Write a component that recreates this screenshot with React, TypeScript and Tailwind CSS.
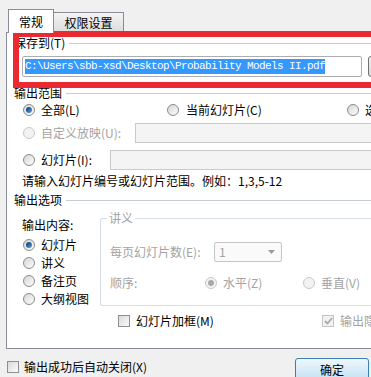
import React from 'react';

const Radio: React.FC<{ checked?: boolean; disabled?: boolean }> = ({ checked = false, disabled = false }) => (
  <span
    className={`flex h-[12px] w-[12px] shrink-0 items-center justify-center rounded-full border ${
      disabled ? 'border-[#c8c8c8] bg-[#f3f3f3]' : 'border-[#8a8a8a] bg-linear-to-br from-[#d6d6d6] to-[#fdfdfd]'
    }`}
  >
    {checked && (
      <span
        className={`h-[6px] w-[6px] rounded-full ${
          disabled ? 'bg-[#a8a8a8]' : 'bg-linear-to-br from-[#0a3570] to-[#5aa6e6]'
        }`}
      />
    )}
  </span>
);

const Check: React.FC<{ checked?: boolean; disabled?: boolean }> = ({ checked = false, disabled = false }) => (
  <span
    className={`flex h-[12px] w-[12px] shrink-0 items-center justify-center border ${
      disabled ? 'border-[#c4c4c4] bg-[#f2f2f2]' : 'border-[#8e8f8f] bg-linear-to-br from-[#dadada] to-[#fbfbfb]'
    }`}
  >
    {checked && (
      <svg width="9" height="8" viewBox="0 0 9 8">
        <path d="M1 4l2.5 2.5L8 1" fill="none" stroke={disabled ? '#a9a9a9' : '#2a4c7d'} strokeWidth="1.8" />
      </svg>
    )}
  </span>
);

const Sep: React.FC<{ label: string; className?: string }> = ({ label, className = '' }) => (
  <div className={`flex items-center ${className}`}>
    <span className="whitespace-nowrap">{label}</span>
    <span className="ml-[4px] h-px flex-1 bg-[#c5cdd3]" />
  </div>
);

export default function App() {
  return (
    <div className="relative flex h-[377px] w-[371px] flex-col overflow-hidden bg-[#f0f0f0] font-['Noto_Sans_CJK_SC',sans-serif] text-[12px] leading-[14px] text-black">
      {/* tabs */}
      <div className="flex h-[32px] shrink-0 items-end pl-[8px]">
        <div className="relative z-10 -mb-px flex h-[24px] w-[46px] items-center justify-center border border-b-0 border-[#898c95] bg-white">
          常规
        </div>
        <div className="flex h-[20px] w-[70px] items-center justify-center border border-b-0 border-l-0 border-[#898c95] bg-linear-to-b from-[#f4f4f4] to-[#dcdcdc]">
          权限设置
        </div>
      </div>

      {/* panel */}
      <div className="ml-[6px] h-[317px] shrink-0 overflow-hidden border border-r-0 border-[#898c95] bg-white">
        <Sep label="保存到(T)" className="h-[20px] pl-[7px]" />
        <div className="ml-[15px] mt-[3px] flex w-[400px] gap-[6px]">
          <div className="flex h-[21px] w-[340px] shrink-0 items-center rounded-[2px] border border-[#abadb3] pl-[2px]">
            <span className="bg-[#3399ff] font-['Liberation_Mono',monospace] text-[11px] leading-[15px] tracking-[-0.6px] text-white">
              C:\Users\sbb-xsd\Desktop\Probability Models II.pdf
            </span>
          </div>
          <div className="h-[21px] w-[30px] shrink-0 rounded-[3px] border border-[#707070] bg-linear-to-b from-[#f2f2f2] to-[#d5d5d5]" />
        </div>

        <Sep label="输出范围" className="mt-[9px] h-[14px] pl-[7px]" />
        <div className="mt-[2px] flex h-[16px] items-center pl-[16px]">
          <div className="flex w-[144px] shrink-0 items-center gap-[6px]">
            <Radio checked />
            <span>全部(L)</span>
          </div>
          <div className="flex w-[180px] shrink-0 items-center gap-[7px]">
            <Radio />
            <span>当前幻灯片(C)</span>
          </div>
          <div className="flex shrink-0 items-center gap-[6px] whitespace-nowrap">
            <Radio />
            <span>选定内容(S)</span>
          </div>
        </div>
        <div className="mt-[5px] flex h-[20px] items-center pl-[16px]">
          <div className="flex w-[112px] shrink-0 items-center gap-[6px] text-[#a3a3a3]">
            <Radio disabled />
            <span className="whitespace-nowrap">自定义放映(U):</span>
          </div>
          <div className="h-[20px] flex-1 border border-r-0 border-[#c9c9c9] bg-[#f4f4f4]" />
        </div>
        <div className="mt-[7px] flex h-[20px] items-center pl-[16px]">
          <div className="flex w-[87px] shrink-0 items-center gap-[6px]">
            <Radio />
            <span className="whitespace-nowrap">幻灯片(I):</span>
          </div>
          <div className="h-[20px] flex-1 border border-r-0 border-[#c9c9c9] bg-[#f4f4f4]" />
        </div>
        <div className="mt-[4px] h-[14px] whitespace-nowrap pl-[15px]">请输入幻灯片编号或幻灯片范围。例如：1,3,5-12</div>

        <Sep label="输出选项" className="mt-[5px] h-[14px] pl-[7px]" />
        <div className="flex">
          <div className="w-[93px] shrink-0 pl-[15px]">
            <div className="mt-[11px] h-[14px]">输出内容:</div>
            <div className="mt-[4px] pl-[1px]">
              <div className="flex h-[18px] items-center gap-[6px]">
                <Radio checked />
                <span>幻灯片</span>
              </div>
              <div className="flex h-[18px] items-center gap-[6px]">
                <Radio />
                <span>讲义</span>
              </div>
              <div className="flex h-[18px] items-center gap-[6px]">
                <Radio />
                <span>备注页</span>
              </div>
              <div className="flex h-[18px] items-center gap-[6px]">
                <Radio />
                <span>大纲视图</span>
              </div>
            </div>
          </div>
          <fieldset className="mt-[4px] h-[95px] min-w-0 flex-1 rounded-l-[3px] border border-r-0 border-[#d5dfe5] text-[#a3a3a3]">
            <legend className="ml-[6px] px-[2px] leading-[14px]">讲义</legend>
            <div className="mt-[17px] flex h-[20px] items-center pl-[9px]">
              <span className="w-[104px] shrink-0 whitespace-nowrap">每页幻灯片数(E):</span>
              <div className="flex h-[20px] w-[68px] shrink-0 items-center justify-between rounded-[2px] border border-[#c6c6c6] bg-[#fafafa] pl-[4px] pr-[6px]">
                <span>1</span>
                <svg width="7" height="4" viewBox="0 0 7 4">
                  <path d="M0 0h7L3.5 4z" fill="#9a9a9a" />
                </svg>
              </div>
            </div>
            <div className="mt-[13px] flex h-[16px] items-center pl-[9px]">
              <span className="w-[95px] shrink-0">顺序:</span>
              <div className="flex w-[98px] shrink-0 items-center gap-[6px]">
                <Radio checked disabled />
                <span>水平(Z)</span>
              </div>
              <div className="flex shrink-0 items-center gap-[6px] whitespace-nowrap">
                <Radio disabled />
                <span>垂直(V)</span>
              </div>
            </div>
          </fieldset>
        </div>
        <div className="mt-[5px] flex h-[16px] items-center pl-[111px]">
          <div className="flex w-[204px] shrink-0 items-center gap-[6px]">
            <Check />
            <span className="whitespace-nowrap">幻灯片加框(M)</span>
          </div>
          <div className="flex shrink-0 items-center gap-[6px] whitespace-nowrap text-[#a3a3a3]">
            <Check checked disabled />
            <span>输出隐藏的幻灯片</span>
          </div>
        </div>
      </div>

      {/* bottom bar */}
      <div className="mt-[9px] flex items-start justify-between">
        <div className="ml-[7px] flex h-[18px] items-center gap-[5px]">
          <Check />
          <span className="whitespace-nowrap">输出成功后自动关闭(X)</span>
        </div>
        <div className="mr-[2px] flex h-[23px] w-[74px] shrink-0 items-center justify-center rounded-[3px] border border-[#3c7fb1] bg-linear-to-b from-[#eef7fd] to-[#c3e1f3]">
          确定
        </div>
      </div>

      {/* red annotation */}
      <div className="pointer-events-none absolute left-[13px] top-[31px] h-[57px] w-[370px] border-[6px] border-[#ea2a30]" />
    </div>
  );
}
